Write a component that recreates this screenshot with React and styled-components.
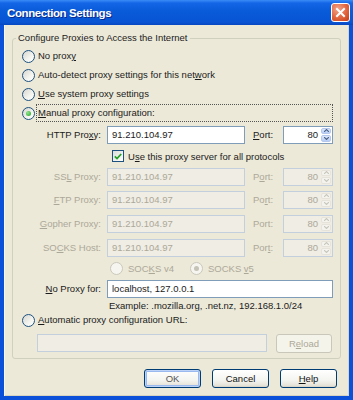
import React from "react";
import styled, { createGlobalStyle, css } from "styled-components";

const GlobalStyle = createGlobalStyle`
  html, body { margin: 0; padding: 0; background: #fff; }
  body { font-family: "Liberation Sans", Arial, sans-serif; font-size: 9.5px; color: #1b1b1b; }
`;

const Window = styled.div`
  width: 353px;
  height: 400px;
  display: flex;
  flex-direction: column;
  background: #0a3fc8;
`;

const TitleBar = styled.div`
  height: 25px;
  flex-shrink: 0;
  display: flex;
  align-items: center;
  justify-content: space-between;
  padding: 0 3px 0 7px;
  box-sizing: border-box;
  background: linear-gradient(
    to bottom,
    #3b8cf7 0%,
    #1566e6 12%,
    #0a5cdb 40%,
    #0757d6 70%,
    #0a55d4 88%,
    #0746c0 100%
  );
`;

const Title = styled.span`
  color: #fff;
  font-weight: bold;
  font-size: 11.5px;
  letter-spacing: -0.4px;
  text-shadow: 1px 1px 0 #0b2a8f;
`;

const CloseButton = styled.div`
  width: 19px;
  height: 19px;
  box-sizing: border-box;
  border: 1px solid #fff;
  border-radius: 3px;
  background: radial-gradient(circle at 35% 30%, #f2a48a, #e0643d 55%, #c63e17);
  display: flex;
  align-items: center;
  justify-content: center;
`;

const Frame = styled.div`
  flex: 1;
  display: flex;
  flex-direction: column;
  background: #ece9d8;
  border: 4px solid #0b50d8;
  border-top: 0;
  padding: 7px 8px 0;
  box-shadow: inset 1px 0 0 #f6f5ee, inset -1px 0 0 #d8d4c2, inset 0 -1px 0 #d8d4c2;
`;

const Group = styled.fieldset`
  margin: 0;
  padding: 2.5px 7px 5px 9px;
  border: 1px solid #d0d0bf;
  border-radius: 3px;
  min-width: 0;
`;

const Legend = styled.legend`
  padding: 0 2px;
  margin-left: -6px;
  line-height: 12px;
`;

const OptionRow = styled.div`
  display: flex;
  align-items: center;
  height: 19px;
  gap: 1px;
`;

const RadioDot = styled.span`
  width: 13px;
  height: 13px;
  flex-shrink: 0;
  box-sizing: border-box;
  border-radius: 50%;
  border: 1px solid ${p => (p.$disabled ? "#cac8bb" : "#1c5180")};
  background: ${p =>
    p.$disabled ? "#f6f5f0" : "linear-gradient(135deg, #d6d5cd 0%, #f4f4f0 60%, #ffffff 100%)"};
  display: flex;
  align-items: center;
  justify-content: center;
  &::after {
    content: "";
    width: 5px;
    height: 5px;
    border-radius: 50%;
    display: ${p => (p.$checked ? "block" : "none")};
    background: ${p =>
      p.$disabled ? "#c5c3b6" : "radial-gradient(circle at 35% 35%, #8fe58f, #21a121)"};
  }
`;

const OptionText = styled.span`
  line-height: 16px;
  padding: 0 1px;
  border: 1px dotted transparent;
  color: ${p => (p.$disabled ? "#aca899" : "inherit")};
  ${p =>
    p.$focused &&
    css`
      flex: 1;
      border-color: #555;
    `}
`;

const Key = styled.u`
  text-decoration: underline;
  text-underline-offset: 1px;
`;

const ProxyGrid = styled.div`
  display: grid;
  grid-template-columns: 85px 138px 38px 50px;
  grid-template-rows: 24px 19px 22px 24px 24px 24px 18px 22px 11px;
  align-items: center;
`;

const FieldLabel = styled.span`
  text-align: right;
  padding-right: 6px;
  white-space: nowrap;
  color: ${p => (p.$disabled ? "#aca899" : "inherit")};
`;

const PortLabel = styled.span`
  padding-left: 8px;
  color: ${p => (p.$disabled ? "#aca899" : "inherit")};
`;

const TextBox = styled.div`
  height: 18px;
  box-sizing: border-box;
  border: 1px solid ${p => (p.$disabled ? "#c3cfdc" : "#7f9db9")};
  background: ${p => (p.$disabled ? "#efede4" : "#fff")};
  color: ${p => (p.$disabled ? "#aca899" : "inherit")};
  line-height: 16px;
  padding-left: 4px;
  white-space: nowrap;
  overflow: hidden;
  ${p => p.$span && css`grid-column: 2 / 5;`}
  ${p => p.$width && css`width: ${p.$width}px;`}
`;

const Spinner = styled.div`
  height: 18px;
  box-sizing: border-box;
  display: flex;
  border: 1px solid ${p => (p.$disabled ? "#c3cfdc" : "#7f9db9")};
  background: ${p => (p.$disabled ? "#efede4" : "#fff")};
`;

const SpinValue = styled.span`
  flex: 1;
  text-align: right;
  line-height: 16px;
  padding-right: 3px;
  color: ${p => (p.$disabled ? "#aca899" : "inherit")};
`;

const SpinButtons = styled.div`
  width: 10px;
  display: flex;
  flex-direction: column;
  gap: 1px;
  padding: 1px 1px 1px 0;
`;

const SpinButton = styled.div`
  flex: 1;
  border-radius: 2px;
  display: flex;
  align-items: center;
  justify-content: center;
  background: ${p =>
    p.$disabled ? "#f4f3ee" : "linear-gradient(to bottom, #dbe6fb, #b6cdf6)"};
  border: 1px solid ${p => (p.$disabled ? "#e6e4da" : "#b5c8ec")};
  box-sizing: border-box;
`;

const CheckRow = styled.div`
  grid-column: 2 / 5;
  display: flex;
  align-items: center;
  gap: 4px;
  padding-left: 5px;
`;

const CheckBox = styled.span`
  width: 12px;
  height: 12px;
  box-sizing: border-box;
  border: 1px solid #1c5180;
  background: linear-gradient(135deg, #dcdcd7, #ffffff);
  display: flex;
  align-items: center;
  justify-content: center;
`;

const SocksRow = styled.div`
  grid-column: 2 / 5;
  display: flex;
  align-items: center;
  padding-left: 3px;
  gap: 14px;
`;

const SocksOption = styled.span`
  display: flex;
  align-items: center;
  gap: 3px;
`;

const Hint = styled.span`
  grid-column: 2 / 5;
  padding-left: 2px;
  line-height: 11px;
`;

const UrlRow = styled.div`
  display: flex;
  align-items: center;
  gap: 9px;
  padding-left: 15px;
  margin-top: 4px;
  height: 19px;
`;

const ButtonBar = styled.div`
  display: flex;
  justify-content: flex-end;
  gap: 11px;
  margin-top: 10px;
  padding-right: 4px;
`;

const Button = styled.button`
  width: ${p => p.$width || 57}px;
  height: 19px;
  padding: 0;
  font: inherit;
  color: #111;
  border: 1px solid #003c74;
  border-radius: 3px;
  background: linear-gradient(to bottom, #ffffff 0%, #f4f4f0 60%, #e6e3d9 90%, #d6d0c5 100%);
  ${p =>
    p.$default &&
    css`
      color: #555;
      box-shadow: inset 0 0 0 1px #bcd2f7, inset 0 0 0 2px #9ab9ef;
    `}
  &:disabled {
    color: #aca899;
    border-color: #c9c7ba;
    background: #f5f4ea;
  }
`;

function Arrow({ up, disabled }) {
  return (
    <svg width="5" height="3" viewBox="0 0 5 3">
      <path
        d={up ? "M0 3 L2.5 0.5 L5 3" : "M0 0 L2.5 2.5 L5 0"}
        fill="none"
        stroke={disabled ? "#c8c6bb" : "#4d6185"}
        strokeWidth="1.1"
      />
    </svg>
  );
}

function Spin({ value, disabled }) {
  return (
    <Spinner $disabled={disabled}>
      <SpinValue $disabled={disabled}>{value}</SpinValue>
      <SpinButtons>
        <SpinButton $disabled={disabled}><Arrow up disabled={disabled} /></SpinButton>
        <SpinButton $disabled={disabled}><Arrow disabled={disabled} /></SpinButton>
      </SpinButtons>
    </Spinner>
  );
}

function Option({ checked, focused, children }) {
  return (
    <OptionRow>
      <RadioDot $checked={checked} />
      <OptionText $focused={focused}>{children}</OptionText>
    </OptionRow>
  );
}

const proxies = [
  { label: <>SS<Key>L</Key> Proxy:</>, port: <>P<Key>o</Key>rt:</> },
  { label: <><Key>F</Key>TP Proxy:</>, port: <>Po<Key>r</Key>t:</> },
  { label: <><Key>G</Key>opher Proxy:</>, port: <>Port:</> },
  { label: <>SO<Key>C</Key>KS Host:</>, port: <>Por<Key>t</Key>:</> },
];

export default function App() {
  return (
    <>
      <GlobalStyle />
      <Window>
        <TitleBar>
          <Title>Connection Settings</Title>
          <CloseButton>
            <svg width="11" height="11" viewBox="0 0 11 11">
              <path d="M2 2 L9 9 M9 2 L2 9" stroke="#fff" strokeWidth="2" strokeLinecap="square" />
            </svg>
          </CloseButton>
        </TitleBar>
        <Frame>
          <Group>
            <Legend>Configure Proxies to Access the Internet</Legend>
            <Option>No prox<Key>y</Key></Option>
            <Option>Auto-detect proxy settings for this net<Key>w</Key>ork</Option>
            <Option><Key>U</Key>se system proxy settings</Option>
            <Option checked focused><Key>M</Key>anual proxy configuration:</Option>

            <ProxyGrid>
              <FieldLabel>HTTP Pro<Key>x</Key>y:</FieldLabel>
              <TextBox>91.210.104.97</TextBox>
              <PortLabel><Key>P</Key>ort:</PortLabel>
              <Spin value="80" />

              <CheckRow>
                <CheckBox>
                  <svg width="8" height="7" viewBox="0 0 8 7">
                    <path d="M0.8 3.4 L3 5.6 L7.2 1" fill="none" stroke="#21a121" strokeWidth="1.7" />
                  </svg>
                </CheckBox>
                <span>U<Key>s</Key>e this proxy server for all protocols</span>
              </CheckRow>

              {proxies.map((p, i) => (
                <React.Fragment key={i}>
                  <FieldLabel $disabled>{p.label}</FieldLabel>
                  <TextBox $disabled>91.210.104.97</TextBox>
                  <PortLabel $disabled>{p.port}</PortLabel>
                  <Spin value="80" disabled />
                </React.Fragment>
              ))}

              <SocksRow>
                <SocksOption>
                  <RadioDot $disabled />
                  <OptionText $disabled>SOC<Key>K</Key>S v4</OptionText>
                </SocksOption>
                <SocksOption>
                  <RadioDot $disabled $checked />
                  <OptionText $disabled>SOCKS <Key>v</Key>5</OptionText>
                </SocksOption>
              </SocksRow>

              <FieldLabel><Key>N</Key>o Proxy for:</FieldLabel>
              <TextBox $span>localhost, 127.0.0.1</TextBox>
              <Hint>Example: .mozilla.org, .net.nz, 192.168.1.0/24</Hint>
            </ProxyGrid>

            <Option><Key>A</Key>utomatic proxy configuration URL:</Option>
            <UrlRow>
              <TextBox $disabled $width={230} />
              <Button disabled $width={56}>R<Key>e</Key>load</Button>
            </UrlRow>
          </Group>
          <ButtonBar>
            <Button $default>OK</Button>
            <Button>Cancel</Button>
            <Button><Key>H</Key>elp</Button>
          </ButtonBar>
        </Frame>
      </Window>
    </>
  );
}
